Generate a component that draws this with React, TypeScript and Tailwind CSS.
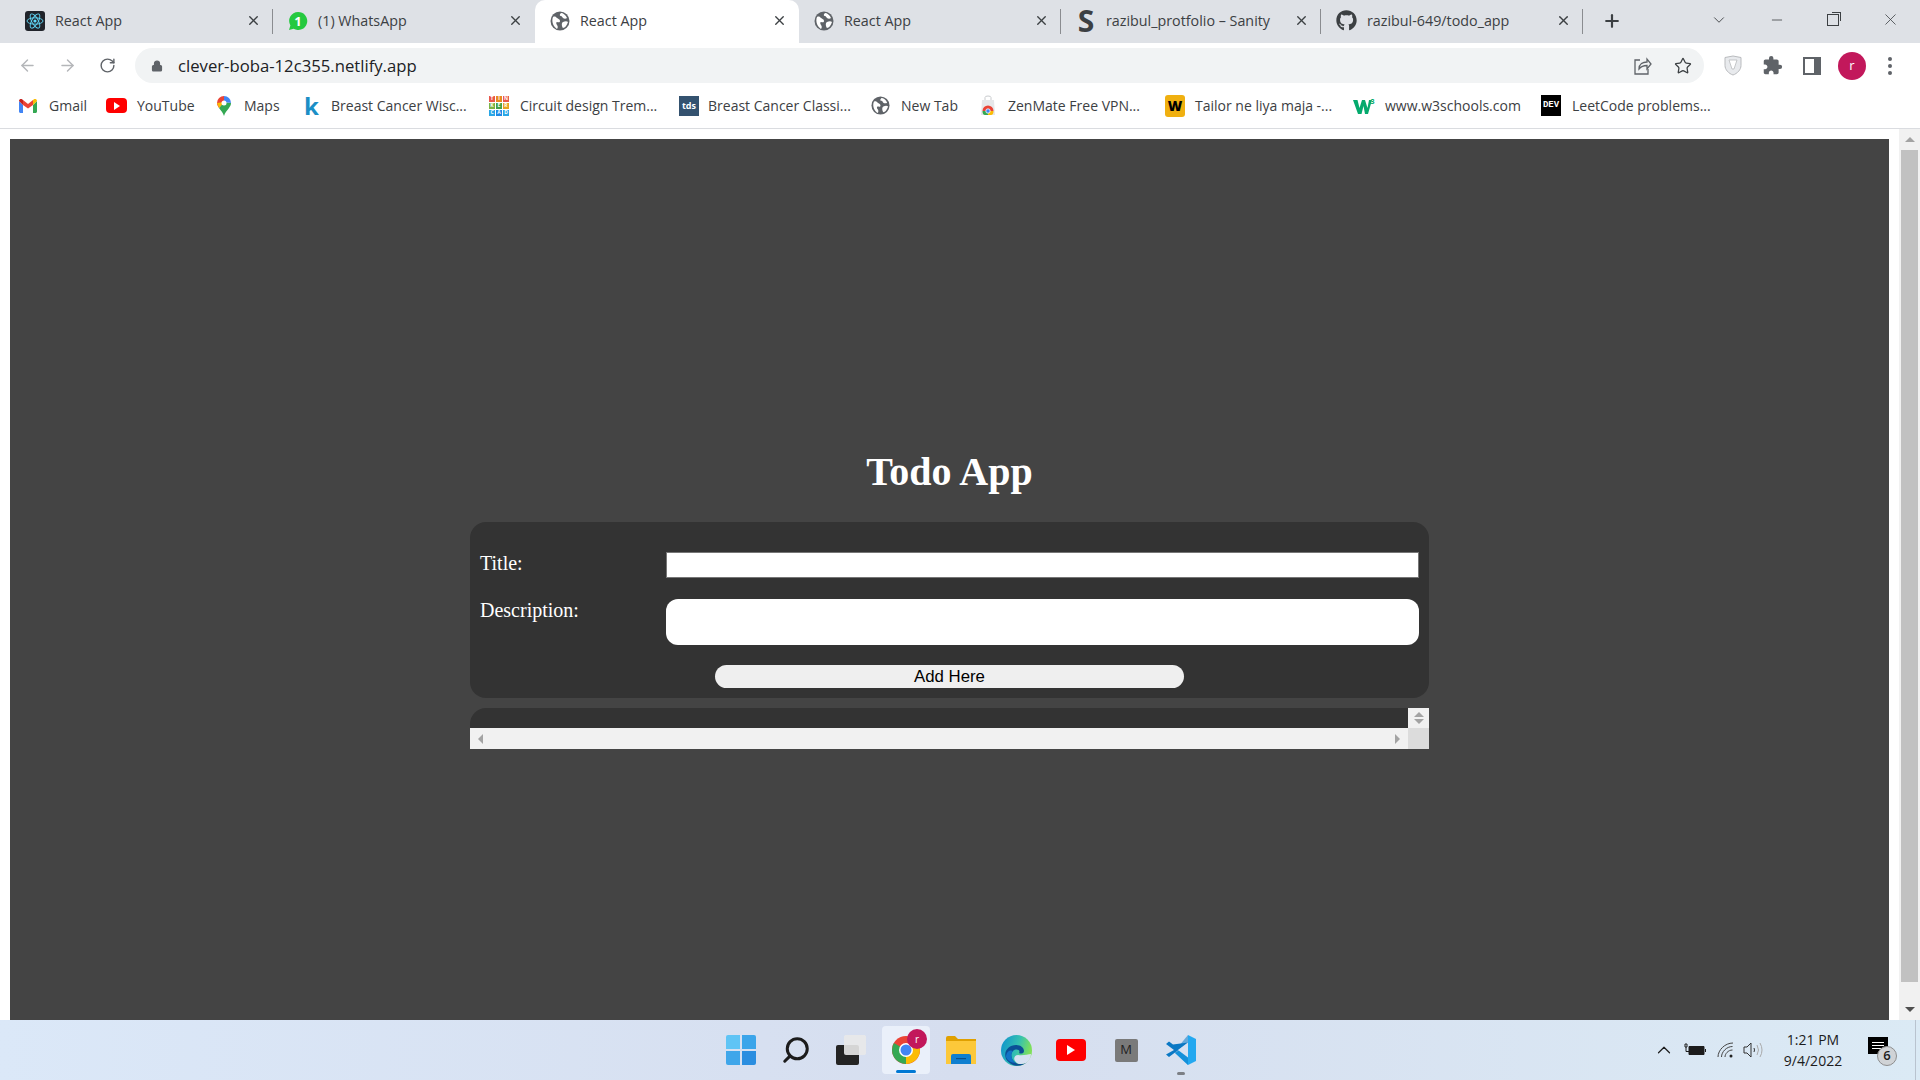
import React from "react";
import { FaGithub } from "react-icons/fa";
import { MdExtension } from "react-icons/md";
import { ArrowLeft, ArrowRight, RotateCw, Lock, Star, X, Plus, ChevronDown, Minus, ChevronUp, Search } from "lucide-react";

const ui = "font-['Open_Sans',sans-serif]";

const Globe = ({ size = 20 }: { size?: number }) => (
  <svg width={size} height={size} viewBox="0 0 20 20">
    <circle cx="10" cy="10" r="9.500" fill="#5f6368" />
    <path d="M3 6c2-1 3 0 4 1s3 1 3 3-2 1-3 1-1 2 0 3 1 3 0 4C4 16 1 11 3 6zM11 2c2 0 5 2 6 5-1 1-3 1-4 0s-1-2-2-2-2-1 0-3zM13 11c2-1 4-1 5 0-1 3-3 6-5 6-1-1-2-5 0-6z" fill="#fff" />
  </svg>
);
const ReactIcon = () => (
  <svg width="20" height="20" viewBox="0 0 20 20">
    <rect width="20" height="20" rx="3" fill="#20232a" />
    <g fill="none" stroke="#61dafb" strokeWidth="0.9">
      <ellipse cx="10" cy="10" rx="8" ry="3.2" />
      <ellipse cx="10" cy="10" rx="8" ry="3.2" transform="rotate(60 10 10)" />
      <ellipse cx="10" cy="10" rx="8" ry="3.2" transform="rotate(120 10 10)" />
    </g>
    <circle cx="10" cy="10" r="1.6" fill="#61dafb" />
  </svg>
);
const WhatsApp = () => (
  <svg width="20" height="20" viewBox="0 0 20 20">
    <path d="M10 1a9 9 0 0 0-7.600 13.600L1 19l4.600-1.300A9 9 0 1 0 10 1z" fill="#25c93f" />
    <text x="10" y="14.500" fontSize="13" fontWeight="700" textAnchor="middle" fill="#fff" fontFamily="Open Sans, sans-serif">1</text>
  </svg>
);
const SanityS = () => (
  <span className="w-5 text-center font-['Open_Sans',sans-serif] text-[30px] leading-none font-bold text-[#3c4043]">S</span>
);

const tabs = [
  { w: "w-[263px]", icon: <ReactIcon />, t: "React App" },
  { w: "w-[262px]", icon: <WhatsApp />, t: "(1) WhatsApp" },
  { w: "w-[264px]", icon: <Globe />, t: "React App", active: true },
  { w: "w-[262px]", icon: <Globe />, t: "React App" },
  { w: "w-[260px]", icon: <SanityS />, t: "razibul_protfolio – Sanity" },
  { w: "w-[262px]", icon: <FaGithub size={21} color="#3c4043" />, t: "razibul-649/todo_app" },
];

function TabStrip() {
  return (
    <div className="flex h-[43px] shrink-0 items-stretch bg-[#dee1e6] pl-[10px]">
      {tabs.map((tab, i) => (
        <div
          key={i}
          className={`relative flex items-center gap-[10px] pb-[2px] pl-[15px] pr-[12px] ${tab.w} ${tab.active ? "rounded-t-[10px] bg-white" : ""}`}
        >
          {tab.icon}
          <span className="whitespace-nowrap text-[14.3px] text-[#3c4043]">{tab.t}</span>
          <X size={15} strokeWidth={2.2} className="ml-auto text-[#3c4043]" />
          {!tab.active && i !== 1 && (
            <span className="absolute right-0 top-[9px] h-[25px] w-px bg-[#8a8c90]" />
          )}
        </div>
      ))}
      <div className="ml-[19px] flex items-center pb-[2px]">
        <Plus size={20} strokeWidth={2.6} className="text-[#3c4043]" />
      </div>
      <div className="ml-auto flex items-center pb-[4px] text-[#3c4043]">
        <ChevronDown size={18} strokeWidth={1.2} />
        <Minus size={16} strokeWidth={1.2} className="ml-[41px]" />
        <div className="relative ml-[42px] h-[12px] w-[12px] border border-[#3c4043] bg-[#dee1e6]">
          <span className="absolute -right-[3px] -top-[3px] h-[9px] w-[9px] border-r border-t border-[#3c4043]" />
        </div>
        <X size={19} strokeWidth={1} className="ml-[42px] mr-[20px]" />
      </div>
    </div>
  );
}

function Toolbar() {
  return (
    <div className="flex h-[40px] shrink-0 bg-white pt-[5px]">
      <div className="flex w-[135px] shrink-0 items-center pl-[18px] text-[#5f6368]">
        <ArrowLeft size={19} strokeWidth={1.8} className="text-[#b4b6b9]" />
        <ArrowRight size={19} strokeWidth={1.8} className="ml-[21px] text-[#b4b6b9]" />
        <RotateCw size={17} strokeWidth={2} className="ml-[22px]" />
      </div>
      <div className="flex h-[35px] w-[1569px] items-center rounded-full bg-[#f1f3f4] pl-[16px] pr-[12px]">
        <Lock size={12} fill="#5f6368" strokeWidth={2.4} className="text-[#5f6368]" />
        <span className="ml-[15px] text-[16.7px] text-[#202124]">clever-boba-12c355.netlify.app</span>
        <svg className="ml-auto" width="20" height="20" viewBox="0 0 20 20" fill="none" stroke="#5f6368" strokeWidth="1.3">
          <path d="M8 4H3v14h13v-5" />
          <path d="M7 13c0-5 4-7 8-7V3l4 5-4 5V9.500c-3 0-6 1-8 3.500z" />
        </svg>
        <Star size={18} strokeWidth={1.7} className="ml-[22.5px] text-[#3c4043]" />
      </div>
      <div className="flex flex-1 items-center text-[#5f6368]">
        <svg className="ml-[20px]" width="18" height="21" viewBox="0 0 18 21">
          <path d="M1 2.500 9 1l8 1.500v8c0 4-3.500 8-8 9.500-4.500-1.500-8-5.500-8-9.500z" fill="#e8eaed" stroke="#b9bbbe" strokeWidth="1" />
          <path d="M5 5h8l-3 9H8z" fill="#fff" stroke="#b9bbbe" strokeWidth="0.8" />
        </svg>
        <MdExtension size={21} className="ml-[20px]" />
        <svg className="ml-[20px]" width="18" height="18" viewBox="0 0 18 18">
          <path d="M1 1h16v16H1z" fill="#fff" stroke="#5f6368" strokeWidth="2" />
          <path d="M11 1h6v16h-6z" fill="#5f6368" />
        </svg>
        <span className="ml-[17px] flex h-[28px] w-[28px] items-center justify-center rounded-full bg-[#c2185b] text-[13px] text-white">r</span>
        <span className="ml-[22px] flex flex-col gap-[3px]">
          <span className="h-[4px] w-[4px] rounded-full bg-[#5f6368]" />
          <span className="h-[4px] w-[4px] rounded-full bg-[#5f6368]" />
          <span className="h-[4px] w-[4px] rounded-full bg-[#5f6368]" />
        </span>
      </div>
    </div>
  );
}

const Gmail = () => (
  <svg width="18" height="14" viewBox="0 0 18 14">
    <path d="M0 2v10.500C0 13.300.7 14 1.500 14H4V6z" fill="#4285f4" />
    <path d="M14 14h2.500c.8 0 1.500-.7 1.500-1.500V2l-4 4z" fill="#34a853" />
    <path d="M4 6 9 9.500 14 6V1l-5 4-5-4z" fill="#ea4335" />
    <path d="M0 2c0-2 2-2.500 3-1.700L4 1v5z" fill="#c5221f" />
    <path d="M18 2c0-2-2-2.500-3-1.700L14 1v5z" fill="#fbbc04" />
  </svg>
);
const YouTube = () => (
  <span className="flex h-[15px] w-[21px] items-center justify-center rounded-[4px] bg-[#f00]">
    <span className="h-0 w-0 border-y-[4px] border-l-[6px] border-y-transparent border-l-white" />
  </span>
);
const Maps = () => (
  <svg width="14" height="20" viewBox="0 0 14 20">
    <path d="M7 0a7 7 0 0 0-7 7c0 2 1 3.500 2 5l5-6z" fill="#ea4335" />
    <path d="M2 12c2 2.500 4 5 5 8 .8-3 3-5.500 5-8 1-1.500 2-3 2-5L7 6z" fill="#34a853" />
    <path d="M7 0a7 7 0 0 1 7 7l-7-1z" fill="#4285f4" />
    <path d="M2 12 7 6 0 7z" fill="#fbbc04" />
    <circle cx="7" cy="7" r="2.500" fill="#fff" />
  </svg>
);
const tinker: [string, string][] = [
  ["T", "#e8574a"], ["I", "#e8891f"], ["N", "#e8574a"],
  ["K", "#7cb342"], ["E", "#43a047"], ["R", "#e8a31f"],
  ["C", "#29a6e6"], ["A", "#1e88e5"], ["D", "#29a6e6"],
];
const Tinker = () => (
  <div className="grid h-[20px] w-[20px] grid-cols-3 gap-px">
    {tinker.map(([l, c], i) => (
      <span key={i} style={{ background: c }} className="flex items-center justify-center text-[5px] font-bold leading-none text-white">{l}</span>
    ))}
  </div>
);
const Zen = () => (
  <svg width="16" height="21" viewBox="0 0 16 21">
    <path d="M5 5V2.500Q5 1 8 1t3 1.500V5" fill="none" stroke="#c9cbce" strokeWidth="1" />
    <path d="M2 5h12l1 15H1z" fill="#e6e7e9" />
    <path d="M2.500 16a5.500 5.500 0 0 1 11 0z" fill="#ea4335" />
    <path d="M8 16h5.500q0 4-2.500 4H8z" fill="#fbbc04" />
    <path d="M2.500 16H8v4H5q-2.500 0-2.500-4z" fill="#34a853" />
    <circle cx="8" cy="16" r="2.200" fill="#4285f4" stroke="#fff" strokeWidth="0.8" />
  </svg>
);
const W3 = () => (
  <svg width="22" height="18" viewBox="0 0 22 18">
    <path d="M0 3h4.500l2 8L9 3h3l2.500 8L16 3h3l-4 14h-3L10.500 9 8.500 17h-3.500z" fill="#04aa6d" />
    <text x="17.500" y="7" fontSize="7" fill="#04aa6d" fontFamily="Open Sans, sans-serif" fontWeight="700">3</text>
  </svg>
);

const marks = [
  { w: "w-[87px]", i: <Gmail />, g: "ml-[19px]", t: "Gmail", tx: "ml-[12px]" },
  { w: "w-[108px]", i: <YouTube />, g: "", t: "YouTube", tx: "ml-[10px]" },
  { w: "w-[87px]", i: <Maps />, g: "ml-[3px]", t: "Maps", tx: "ml-[13px]" },
  { w: "w-[185px]", i: <span className="w-[14px] text-[24px] font-bold leading-none text-[#1b8fc6]">k</span>, g: "", t: "Breast Cancer Wisc...", tx: "ml-[13px]" },
  { w: "w-[190px]", i: <Tinker />, g: "", t: "Circuit design Trem...", tx: "ml-[11px]" },
  { w: "w-[192px]", i: <span className="flex h-[20px] w-[20px] items-center justify-center bg-[#34526f] text-[9px] font-bold text-white">tds</span>, g: "", t: "Breast Cancer Classi...", tx: "ml-[9px]" },
  { w: "w-[109px]", i: <Globe size={19} />, g: "", t: "New Tab", tx: "ml-[11px]" },
  { w: "w-[185px]", i: <Zen />, g: "", t: "ZenMate Free VPN...", tx: "ml-[12px]" },
  { w: "w-[188px]", i: <span className="flex h-[22px] w-[20px] items-center justify-center rounded-[3px] bg-[#f0b010] text-[14px] font-black text-black">W</span>, g: "", t: "Tailor ne liya maja -...", tx: "ml-[10px]" },
  { w: "w-[188px]", i: <W3 />, g: "", t: "www.w3schools.com", tx: "ml-[10px]" },
  { w: "w-[200px]", i: <span className="flex h-[21px] w-[20px] items-center justify-center bg-black font-['Liberation_Mono',monospace] text-[9px] font-bold text-white">DEV</span>, g: "", t: "LeetCode problems...", tx: "ml-[11px]" },
];

function Bookmarks() {
  return (
    <div className="flex h-[46px] shrink-0 items-center border-b border-[#dadce0] bg-white">
      {marks.map((m, i) => (
        <div key={i} className={`flex shrink-0 items-center ${m.w} ${m.g}`}>
          {m.i}
          <span className={`${m.tx} whitespace-nowrap text-[14px] text-[#3c4043]`}>{m.t}</span>
        </div>
      ))}
    </div>
  );
}

function PageScrollbar() {
  return (
    <div className="flex w-[21px] shrink-0 flex-col items-center bg-[#f1f1f1]">
      <div className="flex h-[21px] shrink-0 items-center justify-center">
        <span className="h-0 w-0 border-x-[5px] border-b-[5px] border-x-transparent border-b-[#a3a3a3]" />
      </div>
      <div className="h-[832px] w-[17px] bg-[#c1c1c1]" />
      <div className="mt-auto flex h-[21px] shrink-0 items-center justify-center">
        <span className="h-0 w-0 border-x-[5px] border-t-[5px] border-x-transparent border-t-[#505050]" />
      </div>
    </div>
  );
}

function TodoPage() {
  return (
    <div className="flex min-h-0 flex-1 bg-white">
      <div className="mx-[10px] mt-[10px] flex flex-1 flex-col items-center bg-[#444444] pt-[311px] font-['Liberation_Serif',serif] text-white">
        <h1 className="text-center text-[40px] font-bold leading-[44px]">Todo App</h1>
        <div className="mt-[28px] flex h-[176px] w-[959px] flex-col rounded-[16px] bg-[#333333] px-[10px] pt-[30px]">
          <div className="flex items-start">
            <label className="w-[186px] shrink-0 text-[20px] leading-[23px]">Title:</label>
            <input className="h-[26px] w-[753px] border border-[#767676] bg-white" readOnly />
          </div>
          <div className="mt-[21px] flex items-start">
            <label className="w-[186px] shrink-0 text-[20px] leading-[23px]">Description:</label>
            <textarea className="h-[46px] w-[753px] resize-none rounded-[12px] bg-white" readOnly />
          </div>
          <button className="mx-auto mt-[20px] h-[23px] w-[469px] rounded-full bg-[#efefef] font-['Liberation_Sans',sans-serif] text-[16.8px] leading-[23px] text-black">
            Add Here
          </button>
        </div>
        <div className="mt-[10px] flex h-[41px] w-[959px] flex-col overflow-hidden rounded-tl-[16px] bg-[#333333]">
          <div className="flex h-[20px] shrink-0 justify-end">
            <div className="flex w-[21px] flex-col items-center justify-center gap-[2px] bg-[#f1f1f1]">
              <span className="h-0 w-0 border-x-[5px] border-b-[5px] border-x-transparent border-b-[#a3a3a3]" />
              <span className="h-0 w-0 border-x-[5px] border-t-[5px] border-x-transparent border-t-[#a3a3a3]" />
            </div>
          </div>
          <div className="flex h-[21px] shrink-0 bg-[#f1f1f1]">
            <div className="flex flex-1 items-center justify-between px-[8px]">
              <span className="h-0 w-0 border-y-[5px] border-r-[5px] border-y-transparent border-r-[#a3a3a3]" />
              <span className="h-0 w-0 border-y-[5px] border-l-[5px] border-y-transparent border-l-[#a3a3a3]" />
            </div>
            <div className="w-[21px] bg-[#dcdcdc]" />
          </div>
        </div>
      </div>
      <PageScrollbar />
    </div>
  );
}

const Win = () => (
  <div className="grid h-[30px] w-[30px] grid-cols-2 gap-[1.500px]">
    <span className="rounded-tl-[2px] bg-[#5fc4f5]" />
    <span className="rounded-tr-[2px] bg-[#3ba5ea]" />
    <span className="rounded-bl-[2px] bg-[#3fa6ea]" />
    <span className="rounded-br-[2px] bg-[#2b8ee0]" />
  </div>
);
const TaskView = () => (
  <div className="relative h-[30px] w-[30px]">
    <span className="absolute bottom-0 left-0 h-[20px] w-[23px] rounded-[2px] bg-[#242424]" />
    <span className="absolute right-0 top-0 h-[20px] w-[22px] rounded-[2px] bg-[#e9e9e9]/90" />
  </div>
);
const Chrome = () => (
  <>
    <svg className="absolute left-[10px] top-[10px]" width="28" height="28" viewBox="0 0 28 28">
      <circle cx="14" cy="14" r="14" fill="#ea4335" />
      <path d="M14 14 26.100 7A14 14 0 0 1 14 28z" fill="#fbbc04" />
      <path d="M14 14 14 28A14 14 0 0 1 1.900 7z" fill="#34a853" />
      <circle cx="14" cy="14" r="7" fill="#fff" />
      <circle cx="14" cy="14" r="5.500" fill="#4285f4" />
    </svg>
    <span className="absolute left-[25px] top-[3px] flex h-[20px] w-[20px] items-center justify-center rounded-full bg-[#c2185b] text-[10px] text-white">r</span>
  </>
);
const Folder = () => (
  <svg width="30" height="28" viewBox="0 0 30 28">
    <path d="M0 2q0-2 2-2h7l3 3h18v5H0z" fill="#e0a000" />
    <path d="M0 5h30v23H0z" fill="#fcc83a" />
    <path d="M5 20q0-2 2-2h16q2 0 2 2v8H5z" fill="#0f7fd0" />
    <path d="M10 22h10v1.200H10z" fill="#0a4f8a" />
  </svg>
);
const Edge = () => (
  <svg width="31" height="31" viewBox="0 0 31 31">
    <defs>
      <linearGradient id="eg" x1="0" y1="0" x2="1" y2="0.300">
        <stop offset="0" stopColor="#0c8fd0" />
        <stop offset="0.600" stopColor="#35c1b0" />
        <stop offset="1" stopColor="#7fe05a" />
      </linearGradient>
    </defs>
    <circle cx="15.500" cy="15.500" r="15.500" fill="url(#eg)" />
    <path d="M5 24C2 16 8 10 15 10c5 0 8 3 8 6s-4 3-5 2c2-3-3-5-6-2s-2 9 3 12c3 2 8 1 11-1-5 5-15 6-21-3z" fill="#0b4f96" />
    <path d="M17 20c5 1 10-1 13-1 0 3-2 7-5 9-5 2-9 1-11-2s0-6 3-6z" fill="#d6e1f2" />
    <path d="M12 16c-3 3-2 9 3 12-5 0-9-3-10-6 0-4 3-8 7-6z" fill="#1173c6" />
  </svg>
);
const VSCode = () => (
  <svg width="30" height="30" viewBox="0 0 30 30">
    <path d="M22 0 30 4v22l-8 4-13-12 13-8z" fill="#23a8f0" />
    <path d="M22 0 22 30 8 17z" fill="#0a7cc8" opacity=".55" />
    <path d="m22 7.500L7 19l-4 3-3-2.500L8 15 0 9l3-2.500 4 3z" fill="#0a78c4" />
    <path d="M22 7.500v15L12 15z" fill="#d6e1f2" />
  </svg>
);

function Taskbar() {
  const app = "flex h-[48px] w-[48px] items-center justify-center";
  return (
    <div className="relative flex h-[60px] shrink-0 items-center bg-gradient-to-r from-[#dbe8f8] via-[#d6deef] to-[#dbeaf5]">
      <div className="ml-[717px] flex items-center gap-[7px]">
        <div className={app}><Win /></div>
        <div className={app}><Search size={30} strokeWidth={2.4} className="-scale-x-100 text-[#1c1c1c]" /></div>
        <div className={app}><TaskView /></div>
        <div className="relative h-[48px] w-[48px] rounded-[4px] bg-[#eaf0fa]">
          <Chrome />
          <span className="absolute bottom-[1px] left-[14px] h-[3px] w-[20px] rounded-full bg-[#0078d4]" />
        </div>
        <div className={app}><Folder /></div>
        <div className={app}><Edge /></div>
        <div className={app}><div className="flex h-[22px] w-[30px] items-center justify-center rounded-[4px] bg-[#f00]"><span className="h-0 w-0 border-y-[5px] border-l-[8px] border-y-transparent border-l-white" /></div></div>
        <div className={app}><span className={`flex h-[23px] w-[23px] items-center justify-center rounded-[2px] bg-[#7a7a7a] ${ui} text-[13px] text-[#222]`}>M</span></div>
        <div className={`relative ${app}`}>
          <VSCode />
          <span className="absolute bottom-[-1px] left-[20px] h-[3px] w-[8px] rounded-full bg-[#7c7f85]" />
        </div>
      </div>
      <div className="ml-auto flex items-center text-[#1c1c1c]">
        <ChevronUp size={22} strokeWidth={1.3} />
        <svg className="ml-[9px]" width="22" height="14" viewBox="0 0 22 14">
          <path d="M1 1h2M1 1v3h2V1M2 4v3" fill="none" stroke="#1c1c1c" strokeWidth="1" />
          <path d="M5 3.500h15v8H5z" fill="#1c1c1c" stroke="#1c1c1c" strokeWidth="1" />
          <path d="M2 7v1.500h3" fill="none" stroke="#1c1c1c" strokeWidth="1" />
          <path d="M21 6h1v3h-1z" fill="#1c1c1c" />
        </svg>
        <svg className="ml-[11px]" width="18" height="16" viewBox="0 0 18 16" fill="none" stroke="#444" strokeWidth="1">
          <path d="M1 15C1 8 8 1 16 1M4.500 15c0-5 5-10.500 11-10.500M8 15c0-3 3-7 7.500-7" />
          <circle cx="14" cy="14" r="1.500" fill="#222" stroke="none" />
        </svg>
        <svg className="ml-[8.5px]" width="21" height="16" viewBox="0 0 21 16" fill="none" stroke="#333" strokeWidth="1">
          <path d="M1 5h3l4-4v14l-4-4H1z" />
          <path d="M11 6q1 2 0 4" />
          <path d="M14 3q3 5 0 10M17 1q4 7 0 14" stroke="#aaa" />
        </svg>
        <div className={`ml-[9px] flex w-[80px] flex-col items-center ${ui} text-[14px] leading-[21px] text-[#1c1c1c]`}>
          <span>1:21 PM</span>
          <span>9/4/2022</span>
        </div>
        <div className="relative ml-[15px] mr-[30px] h-[26px] w-[22px]">
          <span className="absolute left-0 top-0 flex h-[17px] w-[20px] flex-col justify-center gap-[2px] bg-black px-[4px]">
            <span className="h-px bg-white" />
            <span className="h-px bg-white" />
            <span className="h-px bg-white" />
          </span>
          <span className={`absolute left-[9px] top-[9px] flex h-[20px] w-[20px] items-center justify-center rounded-full border border-[#8e8e8e] bg-[#d0d3d6] ${ui} text-[13px] font-semibold`}>6</span>
        </div>
      </div>
      <span className="absolute bottom-0 right-[4px] top-0 w-px bg-[#b9c3cf]" />
    </div>
  );
}

export default function App() {
  return (
    <div className={`flex h-screen w-screen flex-col overflow-hidden ${ui}`}>
      <TabStrip />
      <Toolbar />
      <Bookmarks />
      <TodoPage />
      <Taskbar />
    </div>
  );
}
